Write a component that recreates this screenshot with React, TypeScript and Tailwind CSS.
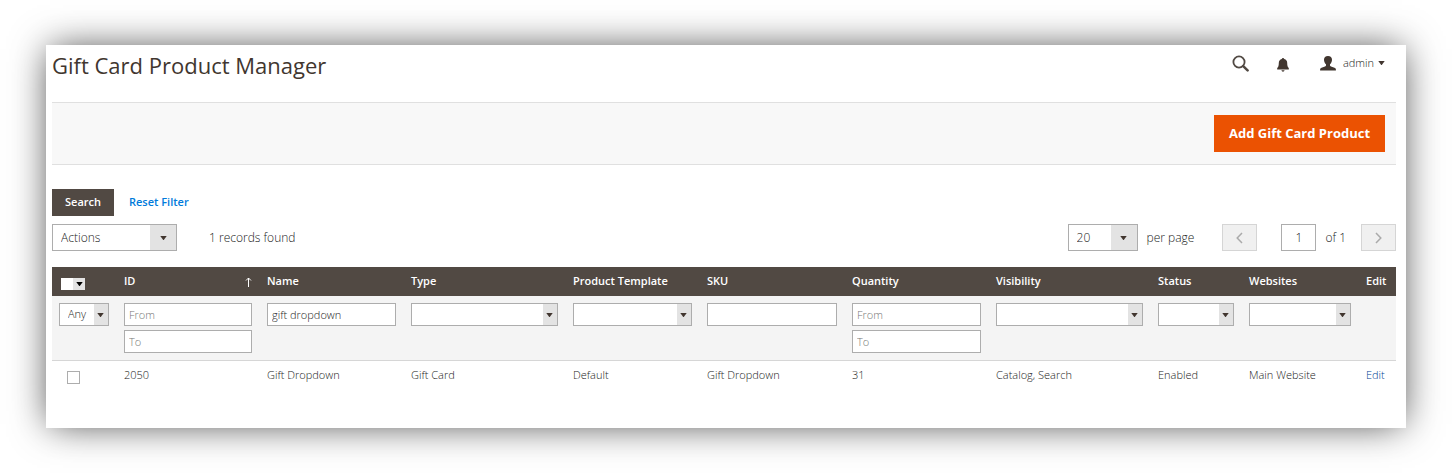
import React from 'react';

type SelectProps = {
  label: string;
  options: string[];
  className?: string;
  arrow?: string;
};

function Caret({ className = 'fill-[#41362f]' }: { className?: string }) {
  return (
    <svg viewBox="0 0 8 5" aria-hidden="true" className={`h-[4px] w-[7px] ${className}`}>
      <path d="M0 0h8L4.6 4.6a.8.8 0 0 1-1.2 0z" />
    </svg>
  );
}

function Select({ label, options, className = '', arrow = 'w-[14px] pr-[2px]' }: SelectProps) {
  return (
    <div className={`grid border border-[#adadad] bg-white ${className}`}>
      <select
        aria-label={label}
        className="col-start-1 row-start-1 h-full w-full appearance-none bg-transparent px-2 outline-none"
      >
        {options.map((o) => (
          <option key={o}>{o}</option>
        ))}
      </select>
      <span
        className={`pointer-events-none col-start-1 row-start-1 flex items-center justify-center justify-self-end bg-[#e3e3e3] ${arrow}`}
      >
        <Caret />
      </span>
    </div>
  );
}

const fieldClass =
  'block h-[23px] w-full border border-[#adadad] bg-white px-1 outline-none placeholder:text-[#777]';

function Field({ label, value, placeholder }: { label: string; value?: string; placeholder?: string }) {
  return <input type="text" aria-label={label} defaultValue={value} placeholder={placeholder} className={fieldClass} />;
}

function RangeFields({ label }: { label: string }) {
  return (
    <div className="flex flex-col gap-1">
      <Field label={`${label} from`} placeholder="From" />
      <Field label={`${label} to`} placeholder="To" />
    </div>
  );
}

const gridSelect = 'h-[23px] w-full';

const columns: { title: string; width: string; value: string; filter: React.ReactNode }[] = [
  { title: 'ID', width: 'w-[143px]', value: '2050', filter: <RangeFields label="ID" /> },
  { title: 'Name', width: 'w-[144px]', value: 'Gift Dropdown', filter: <Field label="Name" value="gift dropdown" /> },
  { title: 'Type', width: 'w-[162px]', value: 'Gift Card', filter: <Select label="Type" options={['', 'Gift Card']} className={gridSelect} /> },
  { title: 'Product Template', width: 'w-[134px]', value: 'Default', filter: <Select label="Product Template" options={['', 'Default']} className={gridSelect} /> },
  { title: 'SKU', width: 'w-[145px]', value: 'Gift Dropdown', filter: <Field label="SKU" /> },
  { title: 'Quantity', width: 'w-[144px]', value: '31', filter: <RangeFields label="Quantity" /> },
  { title: 'Visibility', width: 'w-[162px]', value: 'Catalog, Search', filter: <Select label="Visibility" options={['', 'Catalog, Search']} className={gridSelect} /> },
  { title: 'Status', width: 'w-[91px]', value: 'Enabled', filter: <Select label="Status" options={['', 'Enabled']} className={gridSelect} /> },
  { title: 'Websites', width: 'w-[117px]', value: 'Main Website', filter: <Select label="Websites" options={['', 'Main Website']} className={gridSelect} /> },
];

function Header() {
  return (
    <header className="flex h-[57px] items-start justify-between pr-[11px]">
      <h1 className="pt-1 text-[22px] leading-[32px] text-[#41362f]">Gift Card Product Manager</h1>
      <div className="flex h-[36px] items-center">
        <button type="button" aria-label="Search" className="mr-7">
          <svg viewBox="0 0 17 17" className="h-[17px] w-[17px] fill-none stroke-[#514943]">
            <circle cx="7" cy="7" r="5.6" strokeWidth="1.8" />
            <path d="M11.2 11.2l4.4 4.2" strokeWidth="2.5" strokeLinecap="round" />
          </svg>
        </button>
        <button type="button" aria-label="Notifications" className="mr-[31px] pt-1">
          <svg viewBox="0 0 12 14" className="h-[14px] w-[12px] fill-[#41362f]">
            <path d="M6 0c.7 0 1.1.4 1.200 1 2 .5 3 2 3 3.900 0 2.800.5 4 1.600 5.100v1.500H.2V10c1.100-1.100 1.600-2.300 1.600-5.100C1.800 3 2.800 1.500 4.800 1 4.900.4 5.300 0 6 0z" />
            <path d="M4.400 12.300h3.200c-.2.900-.8 1.400-1.600 1.400s-1.400-.5-1.600-1.400z" />
          </svg>
        </button>
        <button type="button" className="flex items-center text-[11px] font-light text-[#222]">
          <svg viewBox="0 0 16 15" className="mr-[7px] h-[15px] w-[16px] fill-[#41362f]">
            <path d="M8 0c2.600 0 4 1.500 4 3.800 0 1.800-.8 3.600-2 4.500v1.300c0 .5.3.7 1 .9l3.400 1.200c1 .4 1.500 1 1.500 1.900v.9H.1v-.9c0-.9.500-1.500 1.500-1.900L5 10.500c.7-.2 1-.4 1-.9V8.300c-1.200-.9-2-2.700-2-4.500C4 1.500 5.400 0 8 0z" />
          </svg>
          admin
          <Caret className="ml-1 fill-[#41362f]" />
        </button>
      </div>
    </header>
  );
}

function Toolbar() {
  const pager = 'flex h-[27px] w-[35px] items-center justify-center border border-[#d5d5d5] bg-[#f0f0f0]';
  return (
    <div className="mt-6 text-[12px] font-light text-[#222]">
      <div className="flex items-center">
        <button type="button" className="h-[27px] w-[62px] bg-[#514943] text-[11px] font-semibold text-white">
          Search
        </button>
        <button type="button" className="ml-[15px] text-[11px] font-semibold text-[#007bdb]">
          Reset Filter
        </button>
      </div>
      <div className="mt-2 flex items-center">
        <Select label="Actions" options={['Actions', 'Delete']} className="h-[27px] w-[125px]" arrow="w-[26px]" />
        <span className="ml-8">1 records found</span>
        <div className="ml-auto flex items-center">
          <Select label="Records per page" options={['20', '30', '50']} className="h-[27px] w-[70px]" arrow="w-[26px]" />
          <span className="ml-[9px]">per page</span>
          <button type="button" disabled aria-label="Previous page" className={`${pager} ml-7`}>
            <svg viewBox="0 0 7 12" className="h-[12px] w-[7px] fill-none stroke-[#aaa]">
              <path d="M6 1L1.200 6L6 11" strokeWidth="1.500" />
            </svg>
          </button>
          <input
            type="text"
            aria-label="Page"
            defaultValue="1"
            className="ml-6 h-[27px] w-[35px] border border-[#adadad] bg-white text-center outline-none"
          />
          <span className="ml-[9px]">of 1</span>
          <button type="button" disabled aria-label="Next page" className={`${pager} ml-[15px]`}>
            <svg viewBox="0 0 7 12" className="h-[12px] w-[7px] fill-none stroke-[#aaa]">
              <path d="M1 1l4.800 5L1 11" strokeWidth="1.500" />
            </svg>
          </button>
        </div>
      </div>
    </div>
  );
}

function Grid() {
  return (
    <table className="mt-4 w-full table-fixed border-collapse text-left text-[11px] font-light text-[#222]">
      <thead>
        <tr className="h-[29px] bg-[#514943] text-white">
          <th className="w-[64px] pt-1 pl-[9px]">
            <div className="flex h-[12px] w-[24px] bg-[#e3e3e3]">
              <input type="checkbox" aria-label="Select all" className="h-[12px] w-[12px] appearance-none bg-white" />
              <button type="button" aria-label="Selection options" className="flex flex-1 items-center justify-center">
                <Caret className="fill-black" />
              </button>
            </div>
          </th>
          {columns.map((c) => (
            <th key={c.title} className={`pr-[7px] pl-2 font-semibold whitespace-nowrap ${c.width}`}>
              {c.title === 'ID' ? (
                <span className="flex items-center justify-between">
                  ID
                  <svg viewBox="0 0 7 10" aria-hidden="true" className="h-[10px] w-[7px] fill-none stroke-white">
                    <path d="M3.500 10V1M1 3.500L3.500 1L6 3.500" />
                  </svg>
                </span>
              ) : (
                c.title
              )}
            </th>
          ))}
          <th className="w-[38px] pl-2 font-semibold">Edit</th>
        </tr>
      </thead>
      <tbody>
        <tr className="border-b border-[#d6d6d6] bg-[#f4f4f4] align-top">
          <td className="py-[7px] pl-[7px]">
            <Select label="Selected" options={['Any', 'Yes', 'No']} className="h-[23px] w-[50px]" />
          </td>
          {columns.map((c) => (
            <td key={c.title} className="py-[7px] pr-[7px] pl-2">
              {c.filter}
            </td>
          ))}
          <td />
        </tr>
        <tr className="h-[29px]">
          <td className="pt-1 pl-[15px]">
            <input
              type="checkbox"
              aria-label="Select 2050"
              className="block h-[13px] w-[13px] appearance-none border border-[#adadad] bg-white"
            />
          </td>
          {columns.map((c) => (
            <td key={c.title} className="pr-[7px] pl-2 whitespace-nowrap">
              {c.value}
            </td>
          ))}
          <td className="pl-2">
            <a href="#edit" className="text-[#003d94]">
              Edit
            </a>
          </td>
        </tr>
      </tbody>
    </table>
  );
}

export default function App() {
  return (
    <div className="bg-white px-[46px] py-[45px] font-['Open_Sans',sans-serif]">
      <main className="bg-white pr-[10px] pb-[38px] pl-[6px] shadow-[0_0_36px_-4px_rgba(0,0,0,0.75)]">
        <Header />
        <div className="flex h-[63px] items-center justify-end border-y border-[#e0e0e0] bg-[#f8f8f8] pr-[11px]">
          <button type="button" className="h-[37px] w-[171px] bg-[#eb5202] text-[13px] font-bold text-white">
            Add Gift Card Product
          </button>
        </div>
        <Toolbar />
        <Grid />
      </main>
    </div>
  );
}
